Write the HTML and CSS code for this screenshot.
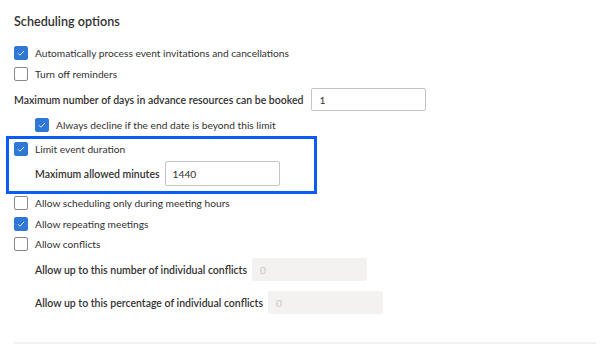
FILE: index.html
```html
<!DOCTYPE html>
<html lang="en">
<head>
<meta charset="UTF-8" />
<title>Scheduling options</title>
<link rel="stylesheet" href="styles.css">
</head>
<body>

<div class="panel">
  <h2>Scheduling options</h2>

  <div class="check-row first">
    <span class="box checked"><svg viewBox="0 0 14 14"><path d="M3.5 7.3l2.3 2.3 4.7-5"/></svg></span>
    <span>Automatically process event invitations and cancellations</span>
  </div>
  <div class="check-row">
    <span class="box"></span>
    <span>Turn off reminders</span>
  </div>

  <div class="field-row">
    <label>Maximum number of days in advance resources can be booked</label>
    <div class="input">1</div>
  </div>

  <div class="check-row indent">
    <span class="box checked"><svg viewBox="0 0 14 14"><path d="M3.5 7.3l2.3 2.3 4.7-5"/></svg></span>
    <span>Always decline if the end date is beyond this limit</span>
  </div>

  <!-- highlighted block -->
  <div class="highlight">
    <div class="check-row">
      <span class="box checked"><svg viewBox="0 0 14 14"><path d="M3.5 7.3l2.3 2.3 4.7-5"/></svg></span>
      <span>Limit event duration</span>
    </div>
    <div class="field-row inner">
      <label>Maximum allowed minutes</label>
      <div class="input tall">1440</div>
    </div>
  </div>

  <div class="check-row after">
    <span class="box"></span>
    <span>Allow scheduling only during meeting hours</span>
  </div>
  <div class="check-row">
    <span class="box checked"><svg viewBox="0 0 14 14"><path d="M3.5 7.3l2.3 2.3 4.7-5"/></svg></span>
    <span>Allow repeating meetings</span>
  </div>
  <div class="check-row">
    <span class="box"></span>
    <span>Allow conflicts</span>
  </div>

  <div class="field-row indent conflicts">
    <label>Allow up to this number of individual conflicts</label>
    <div class="input disabled">0</div>
  </div>
  <div class="field-row indent conflicts second">
    <label>Allow up to this percentage of individual conflicts</label>
    <div class="input disabled">0</div>
  </div>

  <hr class="divider">
</div>

</body>
</html>
```

FILE: styles.css
```css
:root {
  --text: #323130;
  --check: #2f78d6;
  --focus: #0b5cf5;
  --border: #c4c4c4;
}

body {
  margin: 0;
  background: #ffffff;
  font-family: "Lato", "Open Sans", sans-serif;
  color: var(--text);
  font-size: 10.2px;
}

.panel {
  padding: 0 18px 0 14px;
}

h2 {
  margin: 0;
  padding-top: 12px;
  font-size: 12.6px;
  line-height: 20px;
  font-weight: 600;
}

.check-row {
  display: flex;
  align-items: center;
  gap: 7px;
  height: 20px;
}

.check-row.first {
  margin-top: 11px;
}

.check-row.first + .check-row {
  margin-top: 1px;
}

.check-row.indent {
  margin-left: 21px;
  margin-top: 4px;
}

.box {
  width: 14px;
  height: 14px;
  box-sizing: border-box;
  border: 1px solid #8a8886;
  border-radius: 2px;
  flex: none;
  display: flex;
}

.box.checked {
  background: var(--check);
  border-color: var(--check);
}

.box svg {
  width: 12px;
  height: 12px;
  fill: none;
  stroke: #ffffff;
  stroke-width: 1;
}

.field-row {
  display: flex;
  align-items: center;
  gap: 8px;
  margin-top: 4px;
}

.field-row label {
  font-weight: 600;
  font-size: 10.5px;
}

.input {
  width: 115px;
  height: 23px;
  box-sizing: border-box;
  border: 1px solid var(--border);
  border-radius: 2px;
  padding: 0 7px;
  display: flex;
  align-items: center;
}

.input.tall {
  height: 25px;
}

.input.disabled {
  background: #f3f2f1;
  border-color: #f3f2f1;
  color: #c8c6c4;
}

.highlight {
  margin: 1px 0 0 -8px;
  width: 311px;
  box-sizing: border-box;
  border: 3px solid var(--focus);
  padding: 0 0 5px 5px;
}

.field-row.inner {
  margin: 2px 0 0 21px;
  gap: 5px;
}

.check-row.after {
  margin-top: -1px;
}

.check-row.after + .check-row {
  margin-top: 1px;
}

.field-row.indent {
  margin-left: 21px;
}

.field-row.conflicts {
  margin-top: 4px;
  gap: 5px;
}

.field-row.conflicts.second {
  margin-top: 10px;
}

.divider {
  margin: 28px 0 0;
  border: none;
  border-top: 2px solid #f1f1f1;
}
```
